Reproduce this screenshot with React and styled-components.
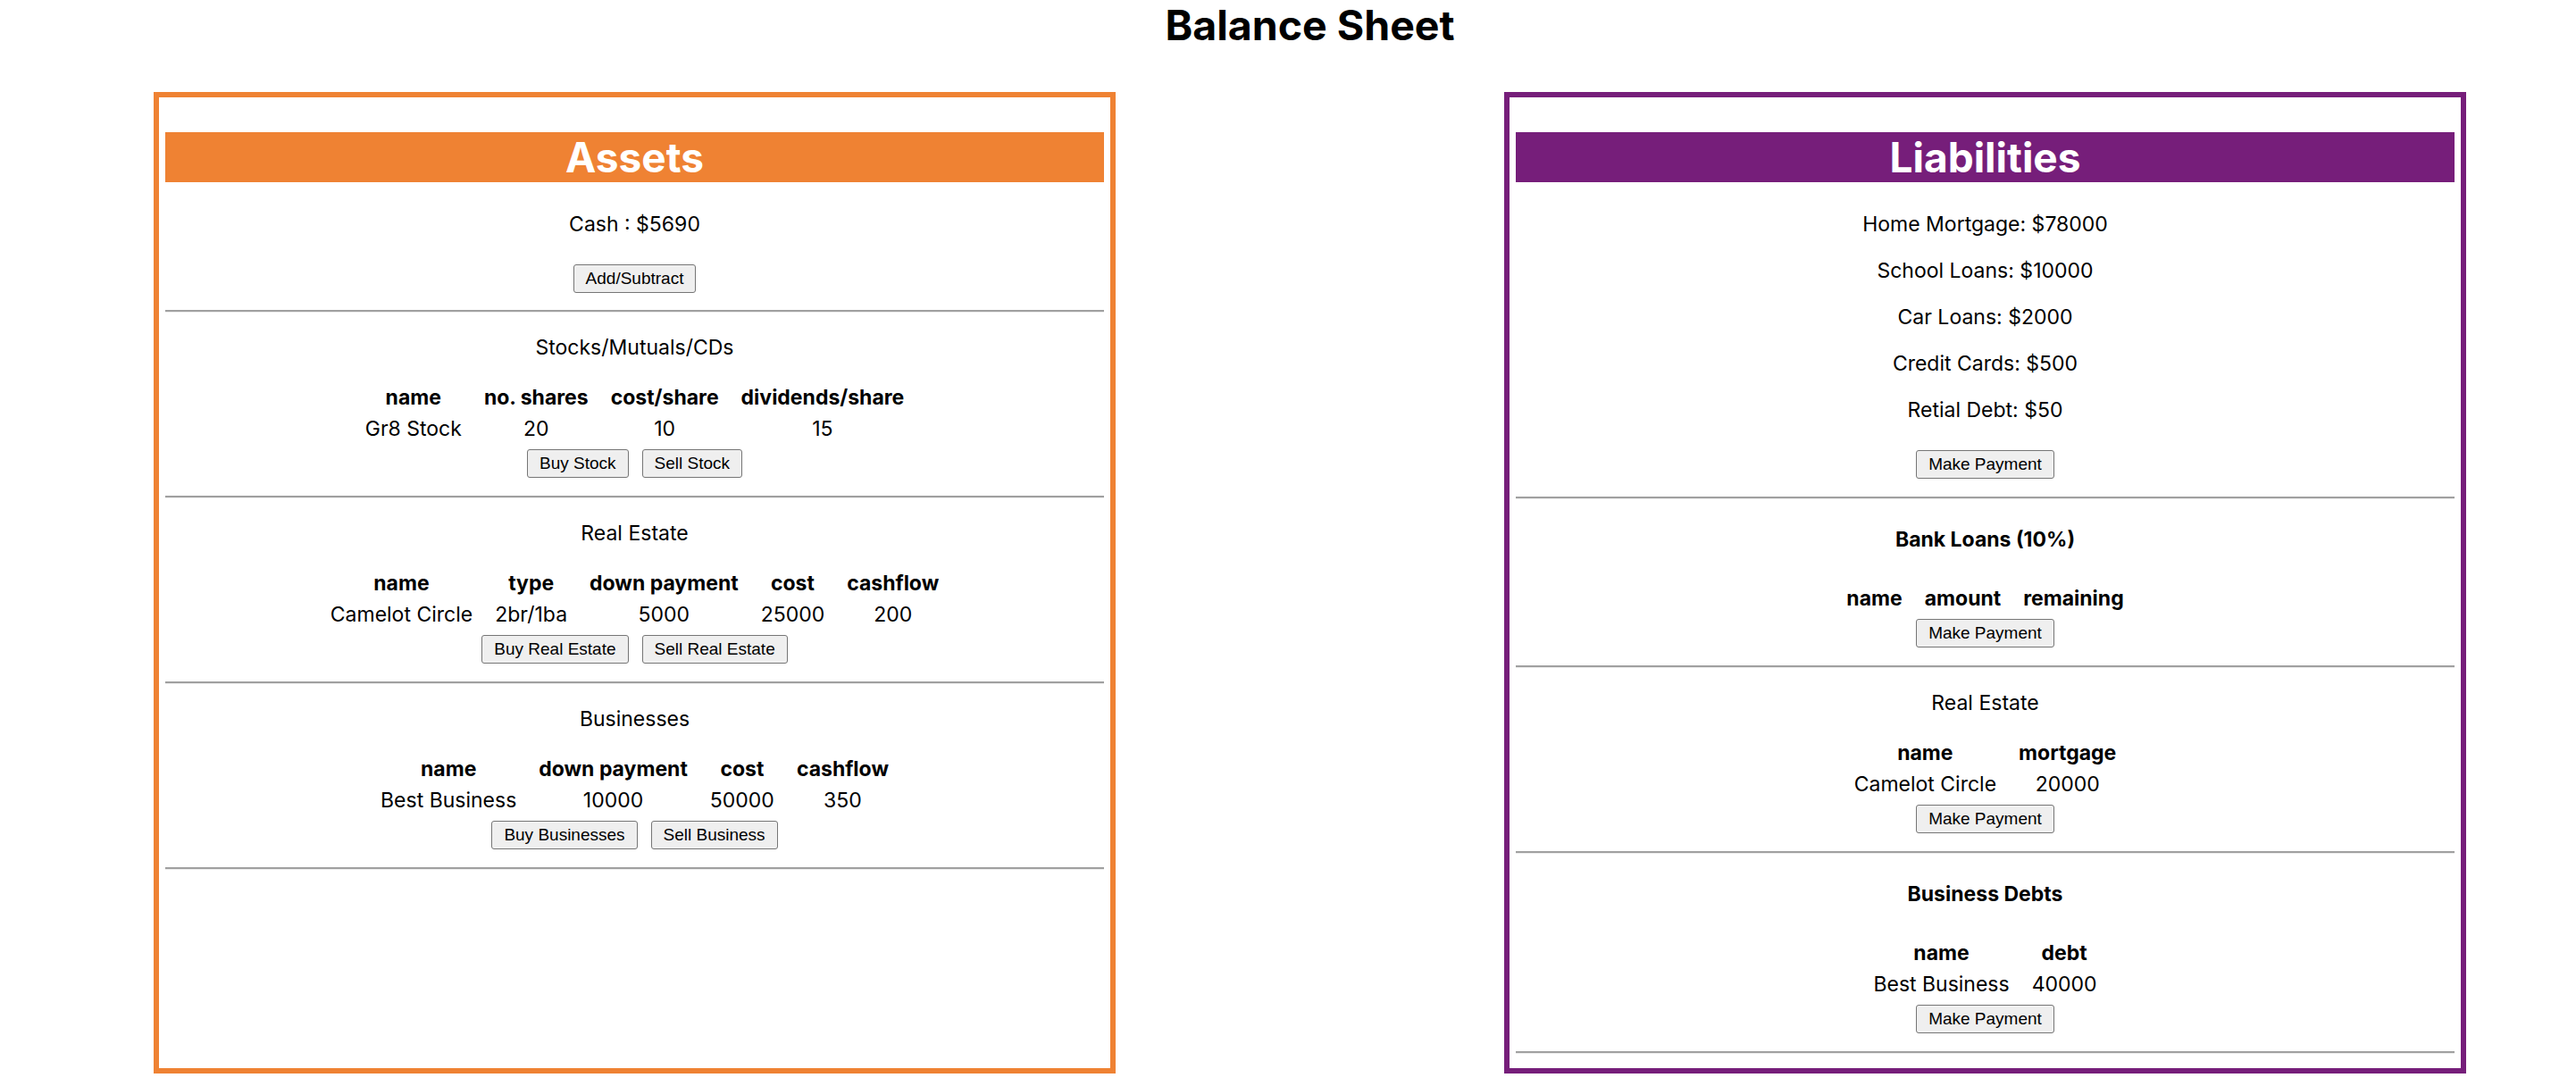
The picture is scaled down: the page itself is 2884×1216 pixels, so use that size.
import React from 'react'
import styled, { createGlobalStyle } from 'styled-components'

const GlobalStyle = createGlobalStyle`
  html, body {
    margin: 0;
    padding: 0;
    background: #fff;
  }
  body {
    font-family: Inter, 'Noto Sans', sans-serif;
    color: #000;
  }
`

const Page = styled.div`
  padding: 0 123px 0 172px;
`
const PageTitle = styled.h1`
  margin: 0 0 47px;
  font-size: 46.5px;
  line-height: 56px;
  font-weight: 700;
  text-align: center;
`
const Columns = styled.div`
  display: flex;
  justify-content: space-between;
  align-items: stretch;
`
const Panel = styled.div`
  box-sizing: border-box;
  width: 1077px;
  border: 6px solid ${(p) => p.$color};
  padding: 39px 7px 16px;
`
const PanelHeader = styled.h2`
  margin: 0;
  height: 56px;
  background-color: ${(p) => p.$color};
  color: #fff;
  font-size: 46px;
  line-height: 56px;
  font-weight: 700;
  text-align: center;
`
const Section = styled.div`
  display: flex;
  flex-direction: column;
  align-items: center;
  padding-top: ${(p) => p.$top || 25}px;
`
const Lines = styled.div`
  display: flex;
  flex-direction: column;
  align-items: center;
  gap: 24px;
`
const Line = styled.p`
  margin: 0;
  font-size: 23px;
  line-height: 28px;
  font-weight: ${(p) => (p.$bold ? 700 : 400)};
`
const SectionTitle = styled(Line)`
  margin-bottom: ${(p) => (p.$bold ? 33 : 23)}px;
`
const Table = styled.table`
  border-collapse: separate;
  border-spacing: 3px;
  font-size: 23px;
  line-height: 28px;

  th,
  td {
    padding: 2px 11px;
    text-align: center;
    white-space: nowrap;
  }
  th {
    font-weight: 700;
  }
`
const ButtonRow = styled.div`
  display: flex;
  justify-content: center;
  gap: 15px;
  margin-top: ${(p) => p.$top || 4}px;
`
const Button = styled.button`
  box-sizing: border-box;
  height: 32px;
  padding: 0 13px;
  background-color: #efefef;
  border: 1px solid #767676;
  border-radius: 3px;
  font-family: 'Liberation Sans', Arial, sans-serif;
  font-size: 19px;
  color: #000;
  cursor: pointer;
`
const Divider = styled.hr`
  width: 100%;
  margin: ${(p) => p.$top || 20}px 0 0;
  border: none;
  border-top: 2px solid #a0a0a0;
  border-bottom: 1px solid #ececec;
  height: 0;
`

const assetSections = [
  {
    title: 'Stocks/Mutuals/CDs',
    columns: ['name', 'no. shares', 'cost/share', 'dividends/share'],
    rows: [['Gr8 Stock', 20, 10, 15]],
    buttons: ['Buy Stock', 'Sell Stock'],
  },
  {
    title: 'Real Estate',
    columns: ['name', 'type', 'down payment', 'cost', 'cashflow'],
    rows: [['Camelot Circle', '2br/1ba', 5000, 25000, 200]],
    buttons: ['Buy Real Estate', 'Sell Real Estate'],
  },
  {
    title: 'Businesses',
    columns: ['name', 'down payment', 'cost', 'cashflow'],
    rows: [['Best Business', 10000, 50000, 350]],
    buttons: ['Buy Businesses', 'Sell Business'],
  },
]

const liabilities = [
  ['Home Mortgage', 78000],
  ['School Loans', 10000],
  ['Car Loans', 2000],
  ['Credit Cards', 500],
  ['Retial Debt', 50],
]

const debtSections = [
  {
    title: 'Bank Loans (10%)',
    bold: true,
    columns: ['name', 'amount', 'remaining'],
    rows: [],
    buttons: ['Make Payment'],
  },
  {
    title: 'Real Estate',
    columns: ['name', 'mortgage'],
    rows: [['Camelot Circle', 20000]],
    buttons: ['Make Payment'],
  },
  {
    title: 'Business Debts',
    bold: true,
    columns: ['name', 'debt'],
    rows: [['Best Business', 40000]],
    buttons: ['Make Payment'],
  },
]

function TableSection({ section }) {
  return (
    <Section $top={section.bold ? 31 : 25}>
      <SectionTitle $bold={section.bold}>{section.title}</SectionTitle>
      <Table>
        <thead>
          <tr>
            {section.columns.map((col) => (
              <th key={col}>{col}</th>
            ))}
          </tr>
        </thead>
        <tbody>
          {section.rows.map((row) => (
            <tr key={row[0]}>
              {row.map((cell, i) => (
                <td key={i}>{cell}</td>
              ))}
            </tr>
          ))}
        </tbody>
      </Table>
      <ButtonRow>
        {section.buttons.map((label) => (
          <Button key={label}>{label}</Button>
        ))}
      </ButtonRow>
      <Divider />
    </Section>
  )
}

export default function App() {
  return (
    <Page>
      <GlobalStyle />
      <PageTitle>Balance Sheet</PageTitle>
      <Columns>
        <Panel $color="#ef8233">
          <PanelHeader $color="#ef8233">Assets</PanelHeader>
          <Section $top={33}>
            <Line>Cash : $5690</Line>
            <ButtonRow $top={31}>
              <Button>Add/Subtract</Button>
            </ButtonRow>
            <Divider $top={19} />
          </Section>
          {assetSections.map((s) => (
            <TableSection key={s.title} section={s} />
          ))}
        </Panel>

        <Panel $color="#761e7a">
          <PanelHeader $color="#761e7a">Liabilities</PanelHeader>
          <Section $top={33}>
            <Lines>
              {liabilities.map(([label, amount]) => (
                <Line key={label}>
                  {label}: ${amount}
                </Line>
              ))}
            </Lines>
            <ButtonRow $top={31}>
              <Button>Make Payment</Button>
            </ButtonRow>
            <Divider />
          </Section>
          {debtSections.map((s) => (
            <TableSection key={s.title + s.columns.length} section={s} />
          ))}
        </Panel>
      </Columns>
    </Page>
  )
}
